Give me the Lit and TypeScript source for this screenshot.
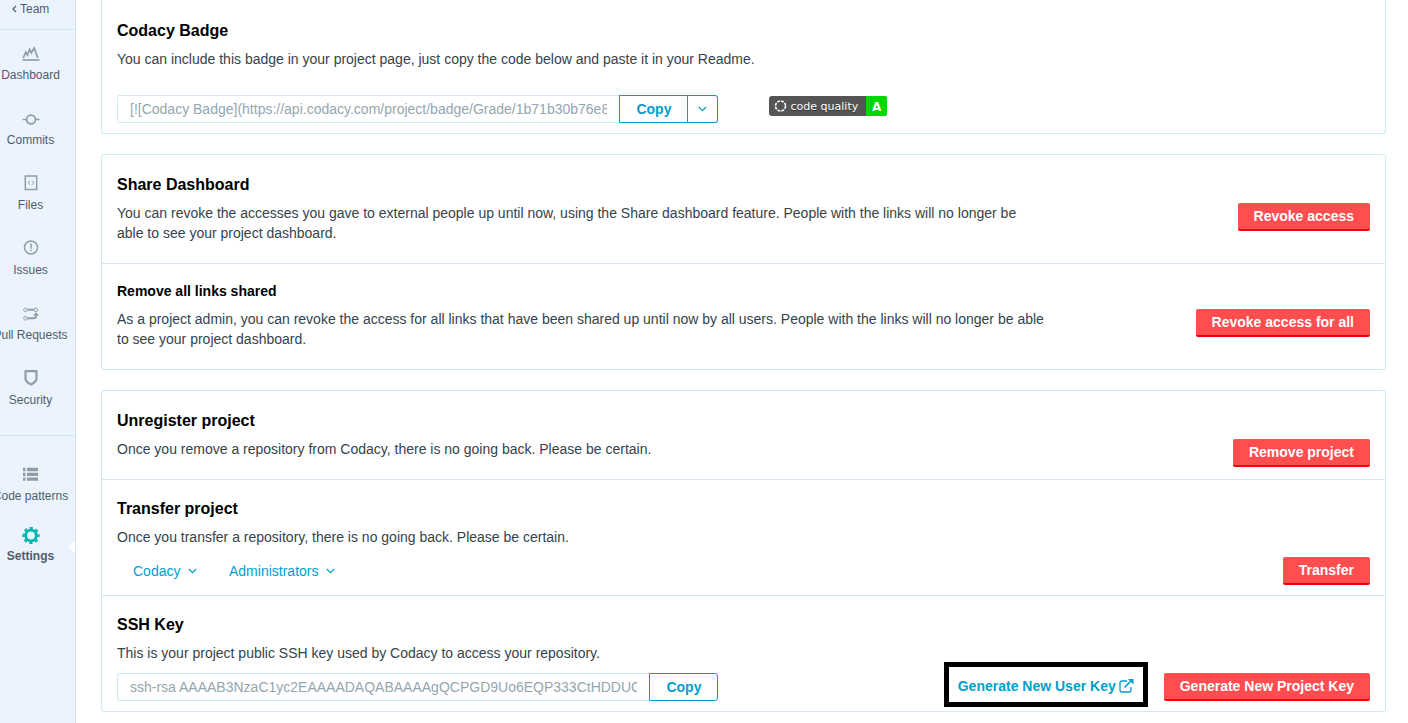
import { LitElement, html, css, svg } from "lit";
import { customElement } from "lit/decorators.js";
import { classMap } from "lit/directives/class-map.js";

const icons: Record<string, unknown> = {
  dashboard: svg`<path d="M1.200 13l2.600-5.800 1.600 2.800 2.200-5.500 1.800 3.200 2.800-4.700 3.600 10" fill="none" stroke="currentColor" stroke-width="1.700"/><path d="M.5 15h17" stroke="currentColor" stroke-width="1.700"/>`,
  commits: svg`<circle cx="9" cy="9.500" r="4.400" fill="none" stroke="currentColor" stroke-width="1.700"/><path d="M.5 9.500h4.200M13.300 9.500h4.200" stroke="currentColor" stroke-width="1.700"/>`,
  files: svg`<path d="M3.300 1h11.400v13.500h-11.400z" fill="none" stroke="currentColor" stroke-width="1.500"/><path d="M8 5.800L6.200 7.800l1.800 2M10 5.800l1.800 2-1.800 2" fill="none" stroke="currentColor"/>`,
  issues: svg`<circle cx="9" cy="7.500" r="6.500" fill="none" stroke="currentColor" stroke-width="1.500"/><path d="M9 3.500v5.300M9 9.800v1.500" stroke="currentColor" stroke-width="1.500"/>`,
  pulls: svg`<g fill="none" stroke="currentColor"><circle cx="3.500" cy="4.800" r="1.800"/><circle cx="13.800" cy="4.800" r="1.800"/><circle cx="3.500" cy="13.300" r="1.800"/><path d="M5.500 4.800H12M5.500 13.300h6q2.500 0 2.500-2V9.800" stroke-width="2"/></g><path d="M11 10.500l3-3.300 3 3.300z" fill="currentColor"/>`,
  security: svg`<path d="M3.500 1.200h11v7.200q0 3.400-5.500 6-5.500-2.600-5.500-6z" fill="none" stroke="currentColor" stroke-width="2.200" stroke-linejoin="round"/>`,
  patterns: svg`<path d="M1 3.500h2.500M1 8.300h2.500M1 13.100h2.500M5 3.500h11M5 8.300h11M5 13.100h11" stroke="currentColor" stroke-width="3.300"/>`,
  settings: svg`<circle cx="9" cy="9.500" r="5.300" fill="none" stroke="currentColor" stroke-width="2.800"/><circle cx="9" cy="9.500" r="7.400" fill="none" stroke="currentColor" stroke-width="2.400" stroke-dasharray="3.200 2.612" stroke-dashoffset="1.600"/>`,
};

const chevron = html`<svg class="chevron" viewBox="0 0 9 6" aria-hidden="true"><path d="M.8 1l3.700 3.700L8.200 1" fill="none" stroke="currentColor" stroke-width="1.200"/></svg>`;

@customElement("side-nav")
export class SideNav extends LitElement {
  static styles = css`
    :host {
      display: block;
      flex: none;
      box-sizing: border-box;
      width: 76px;
      background: #ebf4fe;
      border-right: 1px solid #d3e4ee;
      color: #4f5d68;
      font-size: 12px;
      line-height: 16px;
      overflow: hidden;
    }
    .group { border-bottom: 1px solid #d3e4ee; padding-bottom: 15px; }
    .team {
      display: flex;
      align-items: center;
      gap: 3px;
      padding: 0 0 12px 12px;
      border-bottom: 1px solid #d3e4ee;
      height: 17px;
      color: inherit;
      text-decoration: none;
    }
    .back { width: 5px; height: 8px; }
    .item {
      position: relative;
      display: flex;
      flex-direction: column;
      align-items: center;
      gap: 4px;
      padding: 15px 14px 12px 0;
      white-space: nowrap;
      color: inherit;
      text-decoration: none;
    }
    .icon { width: 18px; height: 18px; flex: none; color: #909da6; }
    .lower { padding-top: 15px; }
    .lower .item { padding-bottom: 7px; }
    .active { font-weight: bold; }
    .active .icon { color: #00b5b2; }
    .active::after {
      content: "";
      position: absolute;
      right: 0;
      top: 30px;
      border: 6px solid transparent;
      border-right: 7px solid #fff;
      border-left: 0;
    }
  `;

  private item(icon: string, label: string, active = false) {
    return html`<a class=${classMap({ item: true, active })} href="#">
      <svg class="icon" viewBox="0 0 18 18" aria-hidden="true">${icons[icon]}</svg>
      <span>${label}</span>
    </a>`;
  }

  render() {
    return html`
      <a class="team" href="#">
        <svg class="back" viewBox="0 0 5 8" aria-hidden="true"><path d="M4 1L1 4l3 3" fill="none" stroke="currentColor" stroke-width="1.200"/></svg>
        Team
      </a>
      <nav>
        <div class="group">
          ${this.item("dashboard", "Dashboard")}
          ${this.item("commits", "Commits")}
          ${this.item("files", "Files")}
          ${this.item("issues", "Issues")}
          ${this.item("pulls", "Pull Requests")}
          ${this.item("security", "Security")}
        </div>
        <div class="lower">
          ${this.item("patterns", "Code patterns")}
          ${this.item("settings", "Settings", true)}
        </div>
      </nav>
    `;
  }
}

@customElement("app-root")
export class AppRoot extends LitElement {
  static styles = css`
    :host {
      display: flex;
      min-height: 100vh;
      background: #fff;
      color: #34434d;
      font: 14px/20px "Liberation Sans", Arial, sans-serif;
    }
    main {
      flex: 1;
      min-width: 0;
      display: flex;
      flex-direction: column;
      gap: 20px;
      padding: 1px 22px 11px 25px;
    }
    .card { border: 1px solid #cfeaf3; border-radius: 3px; }
    .card.first { margin-top: -1px; padding-top: 1px; border-top: 0; border-radius: 0 0 3px 3px; }
    .section { padding: 19px 15px 20px; }
    .section:first-child { padding-top: 20px; }
    .section + .section { border-top: 1px solid #cfeaf3; }
    .section.compact { padding-bottom: 12px; }
    .section.tight { padding-bottom: 10px; }
    h2, h3 { margin: 0 0 8px; color: #000; font-size: 16px; line-height: 20px; }
    h3 { font-size: 14px; }
    .section.minor { padding-top: 17px; }
    p { margin: 0; }
    .row { display: flex; justify-content: space-between; align-items: flex-start; }
    .row p { width: 74%; }
    .controls { margin-top: 10px; align-items: center; }
    .badge-row { display: flex; margin-top: 26px; }
    .group { display: flex; width: 48%; }
    .field {
      flex: 1;
      min-width: 0;
      height: 28px;
      box-sizing: border-box;
      padding: 0 12px;
      border: 1px solid #cfeaf3;
      border-right: 0;
      border-radius: 3px 0 0 3px;
      background: #fff;
      color: #94a6b0;
      font: inherit;
    }
    button {
      height: 28px;
      box-sizing: border-box;
      padding: 0 16px;
      border: 0;
      border-radius: 2px;
      font: bold 14px/20px "Liberation Sans", Arial, sans-serif;
      white-space: nowrap;
    }
    .danger { background: #ff4d50; border-bottom: 2px solid #f00004; color: #fff; }
    .outline { background: #fff; border: 1px solid #009fce; border-radius: 0; color: #009fce; }
    .outline:last-child { border-radius: 0 3px 3px 0; }
    .toggle { display: flex; align-items: center; border-left: 0; padding: 0 10px; }
    .chevron { width: 9px; height: 6px; flex: none; }
    .badge {
      display: flex;
      height: 20px;
      margin: 1px 0 0 4%;
      border-radius: 3px;
      overflow: hidden;
      background: #555;
      color: #fff;
      font: 11px/20px "DejaVu Sans", Verdana, sans-serif;
      text-shadow: 0 1px 0 #333;
      text-decoration: none;
    }
    .quality { display: flex; align-items: center; gap: 4px; padding: 1px 8px 0 5px; }
    .ring { width: 13px; height: 13px; }
    .grade { width: 21px; padding-top: 1px; background: #00d900; text-align: center; font-weight: bold; font-size: 12px; text-shadow: none; }
    .pickers { display: flex; gap: 32px; padding-left: 16px; }
    .picker { display: flex; align-items: center; gap: 7px; color: #009fce; }
    select {
      appearance: none;
      padding: 0;
      border: 0;
      background: none;
      color: inherit;
      font: inherit;
    }
    .actions { display: flex; align-items: center; gap: 30px; }
    .generate {
      position: relative;
      display: flex;
      align-items: center;
      gap: 3px;
      padding-bottom: 2px;
      color: #009fce;
      font-weight: bold;
      text-decoration: none;
    }
    .generate::after {
      content: "";
      position: absolute;
      inset: -14px -14px -9px;
      border: 5px solid #000;
    }
    .external { width: 15px; height: 14px; }
  `;

  render() {
    return html`
      <side-nav></side-nav>
      <main>
        <section class="card first">
          <div class="section tight">
            <h2>Codacy Badge</h2>
            <p>You can include this badge in your project page, just copy the code below and paste it in your Readme.</p>
            <div class="badge-row">
              <div class="group">
                <input class="field" aria-label="Badge code" readonly
                  value="[![Codacy Badge](https://api.codacy.com/project/badge/Grade/1b71b30b76e84b1f)]" />
                <button class="outline">Copy</button>
                <button class="outline toggle" aria-label="More formats">${chevron}</button>
              </div>
              <a class="badge" href="#">
                <span class="quality">
                  <svg class="ring" viewBox="0 0 13 13" aria-hidden="true"><circle cx="6.500" cy="6" r="5" fill="none" stroke="#fff" stroke-width="1.600" stroke-dasharray="2.900 1.027"/></svg>
                  code quality
                </span>
                <span class="grade">A</span>
              </a>
            </div>
          </div>
        </section>

        <section class="card">
          <div class="section">
            <h2>Share Dashboard</h2>
            <div class="row">
              <p>You can revoke the accesses you gave to external people up until now, using the Share dashboard feature. People with the links will no longer be able to see your project dashboard.</p>
              <button class="danger">Revoke access</button>
            </div>
          </div>
          <div class="section minor">
            <h3>Remove all links shared</h3>
            <div class="row">
              <p>As a project admin, you can revoke the access for all links that have been shared up until now by all users. People with the links will no longer be able to see your project dashboard.</p>
              <button class="danger">Revoke access for all</button>
            </div>
          </div>
        </section>

        <section class="card">
          <div class="section compact">
            <h2>Unregister project</h2>
            <div class="row">
              <p>Once you remove a repository from Codacy, there is no going back. Please be certain.</p>
              <button class="danger">Remove project</button>
            </div>
          </div>
          <div class="section tight">
            <h2>Transfer project</h2>
            <p>Once you transfer a repository, there is no going back. Please be certain.</p>
            <div class="row controls">
              <div class="pickers">
                <label class="picker"><select aria-label="Organization"><option>Codacy</option></select>${chevron}</label>
                <label class="picker"><select aria-label="Team"><option>Administrators</option></select>${chevron}</label>
              </div>
              <button class="danger">Transfer</button>
            </div>
          </div>
          <div class="section tight">
            <h2>SSH Key</h2>
            <p>This is your project public SSH key used by Codacy to access your repository.</p>
            <div class="row controls">
              <div class="group">
                <input class="field" aria-label="SSH key" readonly
                  value="ssh-rsa AAAAB3NzaC1yc2EAAAADAQABAAAAgQCPGD9Uo6EQP333CtHDDUOQ7xkL" />
                <button class="outline">Copy</button>
              </div>
              <div class="actions">
                <a class="generate" href="#">Generate New User Key
                  <svg class="external" viewBox="0 0 15 14" aria-hidden="true"><path d="M8 2H3Q1 2 1 4v7q0 2 2 2h7q2 0 2-2V8" fill="none" stroke="currentColor" stroke-width="1.300"/><path d="M5.500 8.500l7-7" stroke="currentColor" stroke-width="1.700"/><path d="M9 0h5.500v5.500z" fill="currentColor"/></svg>
                </a>
                <button class="danger">Generate New Project Key</button>
              </div>
            </div>
          </div>
        </section>
      </main>
    `;
  }
}
